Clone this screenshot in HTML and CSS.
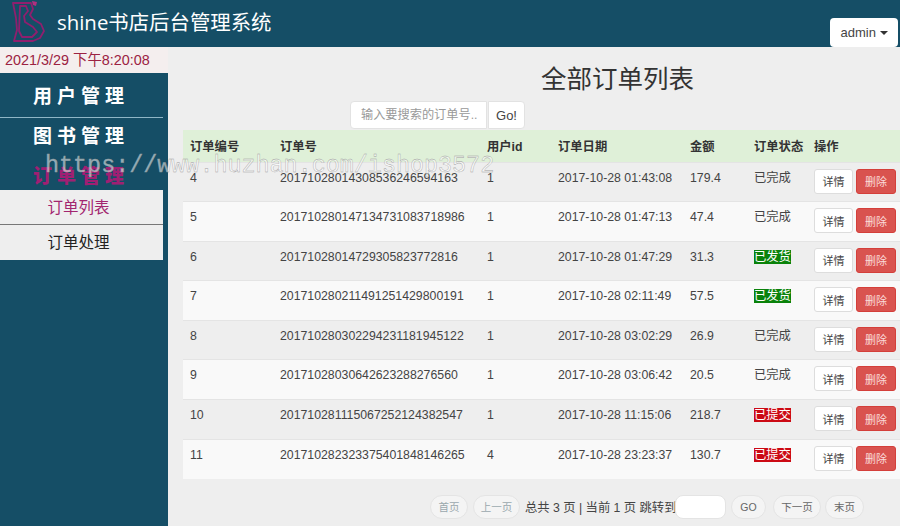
FILE: index.html
```html
<!DOCTYPE html>
<html lang="zh">
<head>
<meta charset="utf-8">
<title>shine书店后台管理系统</title>
<link rel="stylesheet" href="styles.css">
</head>
<body>
<header class="topbar">
  <svg class="logo" width="50" height="47" viewBox="0 0 50 47" fill="none" stroke="#8f1f6e" stroke-width="1.8" stroke-linejoin="round">
    <path d="M13 3 L31 3 L33 9 L30 15 L33 19 L41 24 L44 31 L40 38 L33 41 L14 41 L17 30 L16 18 Z"/>
    <path d="M20 6 L26 6 L28 11 L24 16 L25 22 L33 27 L37 32 L32 37 L22 37 L19 31 Z"/>
    <path d="M32 1 L37 2 L36 6 L33 5 Z" fill="#b0307f" stroke="none"/>
  </svg>
  <h1 class="brand">shine书店后台管理系统</h1>
  <button class="user-btn">admin <span class="caret"></span></button>
</header>
<div class="layout">
  <aside class="side">
    <div class="clock">2021/3/29 下午8:20:08</div>
    <nav class="menu">
      <div class="menu-head menu-line">用户管理</div>
      <div class="menu-head">图书管理</div>
      <div class="menu-head menu-active">订单管理</div>
      <a class="sub sub-current">订单列表</a>
      <a class="sub">订单处理</a>
    </nav>
  </aside>
  <main class="content">
    <h2 class="title">全部订单列表</h2>
    <form class="search">
      <input class="search-input" placeholder="输入要搜索的订单号..">
      <button class="search-go" type="button">Go!</button>
    </form>
    <table class="orders">
      <colgroup>
        <col class="c1"><col class="c2"><col class="c3"><col class="c4"><col class="c5"><col class="c6"><col class="c7">
      </colgroup>
      <thead>
        <tr><th>订单编号</th><th>订单号</th><th>用户id</th><th>订单日期</th><th>金额</th><th>订单状态</th><th>操作</th></tr>
      </thead>
      <tbody>
        <tr><td>4</td><td>20171028014308536246594163</td><td>1</td><td>2017-10-28 01:43:08</td><td>179.4</td><td>已完成</td><td><button class="btn">详情</button><button class="btn btn-del">删除</button></td></tr>
        <tr><td>5</td><td>201710280147134731083718986</td><td>1</td><td>2017-10-28 01:47:13</td><td>47.4</td><td>已完成</td><td><button class="btn">详情</button><button class="btn btn-del">删除</button></td></tr>
        <tr><td>6</td><td>20171028014729305823772816</td><td>1</td><td>2017-10-28 01:47:29</td><td>31.3</td><td><span class="tag tag-green">已发货</span></td><td><button class="btn">详情</button><button class="btn btn-del">删除</button></td></tr>
        <tr><td>7</td><td>201710280211491251429800191</td><td>1</td><td>2017-10-28 02:11:49</td><td>57.5</td><td><span class="tag tag-green">已发货</span></td><td><button class="btn">详情</button><button class="btn btn-del">删除</button></td></tr>
        <tr><td>8</td><td>201710280302294231181945122</td><td>1</td><td>2017-10-28 03:02:29</td><td>26.9</td><td>已完成</td><td><button class="btn">详情</button><button class="btn btn-del">删除</button></td></tr>
        <tr><td>9</td><td>20171028030642623288276560</td><td>1</td><td>2017-10-28 03:06:42</td><td>20.5</td><td>已完成</td><td><button class="btn">详情</button><button class="btn btn-del">删除</button></td></tr>
        <tr><td>10</td><td>201710281115067252124382547</td><td>1</td><td>2017-10-28 11:15:06</td><td>218.7</td><td><span class="tag tag-red">已提交</span></td><td><button class="btn">详情</button><button class="btn btn-del">删除</button></td></tr>
        <tr><td>11</td><td>201710282323375401848146265</td><td>4</td><td>2017-10-28 23:23:37</td><td>130.7</td><td><span class="tag tag-red">已提交</span></td><td><button class="btn">详情</button><button class="btn btn-del">删除</button></td></tr>
      </tbody>
    </table>
    <div class="pager">
      <button class="pill pill-first pill-off">首页</button>
      <button class="pill pill-prev pill-off">上一页</button>
      <span class="pager-text">总共 3 页 | 当前 1 页 跳转到</span>
      <input class="pager-input">
      <button class="pill pill-go">GO</button>
      <button class="pill pill-next">下一页</button>
      <button class="pill pill-last">末页</button>
    </div>
  </main>
</div>
<div class="watermark">https://www.huzhan.com/ishop3572</div>
</body>
</html>
```
FILE: styles.css
```css
* { box-sizing: border-box; }
html, body { margin: 0; height: 526px; overflow: hidden; }
body {
  position: relative;
  background: #eee;
  font-family: "Liberation Sans", "Noto Sans CJK SC", sans-serif;
  font-size: 13px;
  color: #444;
}
.topbar {
  height: 47px;
  background: #154e66;
  display: flex;
  align-items: flex-start;
  position: relative;
}
.logo { flex: none; }
.brand {
  margin: 7px 0 0 7px;
  font-size: 20.4px;
  line-height: 30px;
  font-weight: 400;
  color: #fff;
  font-family: "Open Sans", "Noto Sans CJK SC", sans-serif;
}
.user-btn {
  margin: 18px 2px 0 auto;
  width: 68px;
  height: 29px;
  background: #fff;
  border: 0;
  border-radius: 4px;
  font: 13px/20px "Liberation Sans", sans-serif;
  color: #444;
  padding: 0;
}
.caret {
  display: inline-block;
  vertical-align: middle;
  border-top: 4px solid #333;
  border-left: 4px solid transparent;
  border-right: 4px solid transparent;
}
.layout { display: flex; height: 479px; }
.side { width: 168px; flex: none; display: flex; flex-direction: column; }
.clock {
  height: 26px;
  padding-left: 5px;
  line-height: 26px;
  font-size: 14.4px;
  color: #9c2242;
  background: #f4eeee;
}
.menu { flex: 1; background: #154e66; padding-right: 5px; }
.menu-head {
  padding-left: 33px;
  font-size: 19px;
  font-weight: 700;
  letter-spacing: 5px;
  color: #fff;
  font-family: "Noto Sans CJK SC", sans-serif;
  white-space: nowrap;
  width: 163px;
}
.menu-line { height: 45px; line-height: 44px; border-bottom: 1px solid #8fb6c6; }
.menu-line + .menu-head { height: 40px; line-height: 34px; }
.menu-active { height: 32px; line-height: 33px; color: #a01f73; font-weight: 900; }
.sub {
  display: block;
  height: 35px;
  background: #eee;
  border-bottom: 1px solid #777;
  padding-right: 6px;
  text-align: center;
  line-height: 33px;
  font-size: 15.5px;
  color: #222;
  font-family: "Noto Sans CJK SC", sans-serif;
}
.sub:last-child { border-bottom: 0; }
.sub-current { color: #a2256f; }
.content { flex: 1; min-width: 0; }
.title {
  margin: 12px 0 0 373px;
  font-size: 25.5px;
  line-height: 36px;
  font-weight: 400;
  color: #333;
  font-family: "Noto Sans CJK SC", sans-serif;
}
.search { display: flex; margin: 6px 0 0 182px; height: 28px; }
.search-input {
  width: 137px;
  height: 28px;
  border: 1px solid #e2e2e2;
  border-radius: 4px 0 0 4px;
  padding: 0 6px 0 10px;
  font: 12.2px "Liberation Sans", "Noto Sans CJK SC", sans-serif;
  background: #fff;
}
.search-input::placeholder { color: #999; }
.search-go {
  width: 37px;
  height: 28px;
  margin-left: 1px;
  border: 1px solid #e2e2e2;
  border-radius: 0 4px 4px 0;
  background: #fff;
  color: #444;
  font: 13px "Liberation Sans", sans-serif;
  padding: 0;
}
.orders {
  margin: 1px 0 0 15px;
  width: 717px;
  table-layout: fixed;
  border-collapse: collapse;
  font-size: 12.3px;
}
.c1 { width: 90px; } .c2 { width: 207px; } .c3 { width: 71px; } .c4 { width: 132px; }
.c5 { width: 64px; } .c6 { width: 60px; } .c7 { width: 93px; }
.orders th {
  height: 32px;
  padding: 0 0 0 7px;
  background: #dff0d8;
  text-align: left;
  font-weight: 700;
  color: #333;
  white-space: nowrap;
}
.orders td {
  height: 39.6px;
  padding: 7px 0 0 7px;
  vertical-align: top;
  line-height: 16px;
  border-top: 1px solid #e4e4e4;
  white-space: nowrap;
}
.orders tbody tr:nth-child(even) td { background: #f9f9f9; }
.tag { color: #fff; padding: 0; }
.tag-green { background: #0a820a; }
.tag-red { background: #cc0a14; }
.btn {
  height: 25px;
  width: 39px;
  margin-top: -1px;
  vertical-align: top;
  background: #fff;
  border: 1px solid #ddd;
  border-radius: 3px;
  font: 11px "Liberation Sans", "Noto Sans CJK SC", sans-serif;
  color: #444;
  padding: 0;
}
.btn-del {
  width: 40px;
  margin-left: 3px;
  background: #d9534f;
  border-color: #d43f3a;
  color: #fbdcdc;
}
.pager { display: flex; align-items: center; height: 24px; margin: 16px 0 0 262px; }
.pill {
  height: 24px;
  border: 1px solid #e4e4e4;
  border-radius: 12px;
  background: #f4f4f4;
  font: 10.5px "Liberation Sans", "Noto Sans CJK SC", sans-serif;
  color: #666;
  padding: 0;
}
.pill-off { color: #9aa8ad; }
.pill-first { width: 38px; }
.pill-prev { width: 47px; margin-left: 5px; }
.pill-go { width: 35px; margin-left: 5px; }
.pill-next { width: 48px; margin-left: 7px; }
.pill-last { width: 39px; margin-left: 4px; }
.pager-text { margin-left: 5px; font-size: 12.3px; width: 148px; white-space: nowrap; }
.pager-input {
  width: 51px;
  height: 24px;
  margin-left: 2px;
  border: 1px solid #e4e4e4;
  border-radius: 8px;
  background: #fff;
}
.watermark {
  position: absolute;
  left: 45px;
  top: 152px;
  font: 23.4px/28px "Liberation Mono", monospace;
  color: rgba(255, 255, 255, .55);
  -webkit-text-stroke: .35px #9a9a9a;
  white-space: nowrap;
  pointer-events: none;
}
```
